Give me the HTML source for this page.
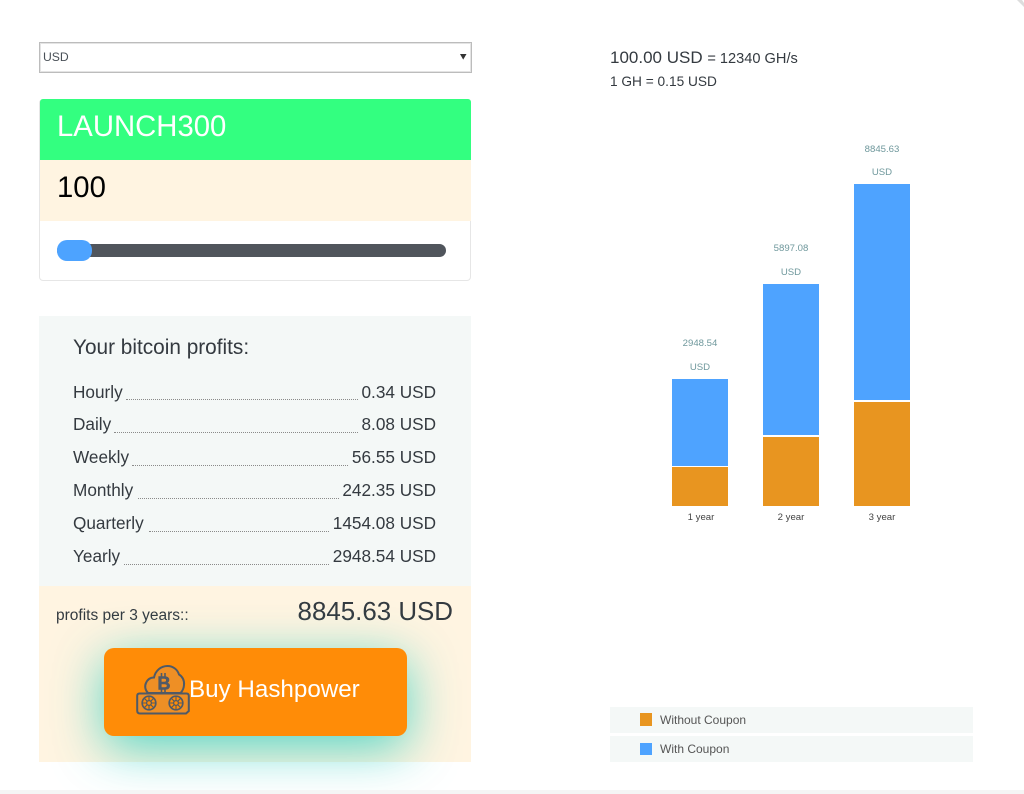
<!DOCTYPE html>
<html><head><meta charset="utf-8"><style>
*{box-sizing:border-box}
html,body{margin:0;padding:0;width:1024px;height:794px;overflow:hidden;background:#fff;font-family:"Liberation Sans",sans-serif;color:#343a40}
.a{position:absolute;white-space:nowrap}
.rl{position:absolute;left:73px;font-size:17.2px;line-height:22px;color:#343a40}
.rv{position:absolute;right:588px;font-size:17.2px;line-height:22px;color:#343a40}
.d{position:absolute;height:0;border-bottom:1px dotted #8a8a8a}
.bar{position:absolute;width:56px}
.bl{position:absolute;width:90px;text-align:center;font-size:9.6px;line-height:12px;color:#6f989c}
.xl{position:absolute;width:90px;text-align:center;font-size:9.6px;line-height:12px;color:#444}
</style></head><body>
<div class="a" style="left:39px;top:42px;width:433px;height:31px;border:1px solid #bcbcbc;background:#fff;box-shadow:inset 0 0 0 1px #e4e4e4"></div>
<div class="a" style="left:43px;top:50px;font-size:12.2px;line-height:14px;color:#495057">USD</div>
<svg class="a" style="left:460px;top:54px" width="7" height="6"><path d="M0 0H6.500L3.200 5.600Z" fill="#333"/></svg>

<div class="a" style="left:39px;top:99px;width:432px;height:182px;border:1px solid #e6e6e6;border-radius:4px;background:#fff;overflow:hidden"></div>
<div class="a" style="left:40px;top:99px;width:431px;height:61px;background:#33ff80;border-radius:3px 3px 0 0"></div>
<div class="a" style="left:57px;top:110px;font-size:29.3px;line-height:34px;color:#fff">LAUNCH300</div>
<div class="a" style="left:40px;top:160px;width:431px;height:61px;background:#fff4e1"></div>
<div class="a" style="left:57px;top:171px;font-size:29.3px;line-height:34px;color:#000">100</div>
<div class="a" style="left:57px;top:244px;width:389px;height:13px;border-radius:7px;background:#50555c"></div>
<div class="a" style="left:57px;top:240px;width:35px;height:20.500px;border-radius:10px;background:#4da3ff"></div>

<div class="a" style="left:39px;top:316px;width:432px;height:270px;background:#f4f8f7"></div>
<div class="a" style="left:73px;top:336px;font-size:20.8px;line-height:24px;color:#343a40">Your bitcoin profits:</div>

<div class="rl" style="top:381px">Hourly</div><div class="d" style="left:126px;width:232px;top:399px"></div><div class="rv" style="top:381px">0.34 USD</div>
<div class="rl" style="top:413px">Daily</div><div class="d" style="left:114px;width:244px;top:432px"></div><div class="rv" style="top:413px">8.08 USD</div>
<div class="rl" style="top:446px">Weekly</div><div class="d" style="left:132px;width:216px;top:465px"></div><div class="rv" style="top:446px">56.55 USD</div>
<div class="rl" style="top:479px">Monthly</div><div class="d" style="left:138px;width:201px;top:498px"></div><div class="rv" style="top:479px">242.35 USD</div>
<div class="rl" style="top:512px">Quarterly</div><div class="d" style="left:149px;width:180px;top:531px"></div><div class="rv" style="top:512px">1454.08 USD</div>
<div class="rl" style="top:545px">Yearly</div><div class="d" style="left:124px;width:205px;top:564px"></div><div class="rv" style="top:545px">2948.54 USD</div>

<div class="a" style="left:39px;top:586px;width:432px;height:176px;background:#fff4e1"></div>
<div class="a" style="left:56px;top:607px;font-size:15.5px;line-height:18px;color:#343a40">profits per 3 years::</div>
<div class="a" style="right:571px;top:597px;font-size:25.9px;line-height:30px;color:#343a40">8845.63 USD</div>

<div class="a" style="left:104px;top:648px;width:303px;height:88px;border-radius:10px;background:#ff8c07;box-shadow:0 12px 50px rgba(40,205,190,.8)"></div>
<svg class="a" style="left:135px;top:664px" width="56" height="52" viewBox="135 664 56 52" fill="none" stroke="#505a66" stroke-width="2">
<path d="M148 693C145 690 144.500 686 146 683C147.500 679.500 150.500 677.500 154 677.500C155.500 670.500 161 666 167.500 666C173 666 177.500 669.500 179 674.500C182.500 676.500 184.500 680.500 184 685C183.800 688.500 182.500 691 180.500 693Z" fill="#ee8f25"/>
<path d="M139.500 693.500H186.500C188 693.500 188.800 694.500 188.800 696V711L186 713.500H140C138 713.500 137.200 712.500 137.200 710.500V696C137.200 694.500 138 693.500 139.500 693.500Z" fill="#ee8f25"/>
<circle cx="149" cy="703" r="6.800" fill="#ff8c07" stroke-width="1.700"/><circle cx="149" cy="703" r="2.400" stroke-width="1.300"/>
<path d="M149 696.500V700.600M149 705.400V709.500M142.500 703H146.600M151.400 703H155.500M144.400 698.400L147.300 701.300M150.700 704.700L153.600 707.600M153.600 698.400L150.700 701.300M147.300 704.700L144.400 707.600" stroke-width="1.100"/>
<circle cx="176" cy="703" r="6.800" fill="#ff8c07" stroke-width="1.700"/><circle cx="176" cy="703" r="2.400" stroke-width="1.300"/>
<path d="M176 696.500V700.600M176 705.400V709.500M169.500 703H173.600M178.400 703H182.500M171.400 698.400L174.300 701.300M177.700 704.700L180.600 707.600M180.600 698.400L177.700 701.300M174.300 704.700L171.400 707.600" stroke-width="1.100"/>
<text x="157.500" y="689.500" font-family="Liberation Sans" font-size="18" font-weight="700" fill="#505a66" stroke="#505a66" stroke-width=".6">B</text>
<path d="M161.500 673V677M165 673V677M161.500 689V692M165 689V692" stroke-width="1.600"/>
</svg>
<div class="a" style="left:189px;top:675px;font-size:24.2px;line-height:30px;color:#fff">Buy Hashpower</div>

<div class="a" style="left:610px;top:48px;font-size:17px;line-height:20px;color:#343a40">100.00 USD <span style="font-size:14.600px">= 12340 GH/s</span></div>
<div class="a" style="left:610px;top:73px;font-size:13.700px;line-height:17px;color:#343a40">1 GH = 0.15 USD</div>

<div class="bar" style="left:672px;top:379px;height:86.500px;background:#4ea3ff"></div>
<div class="bar" style="left:672px;top:467px;height:39px;background:#e89520"></div>
<div class="bar" style="left:763px;top:284px;height:151px;background:#4ea3ff"></div>
<div class="bar" style="left:763px;top:437px;height:69px;background:#e89520"></div>
<div class="bar" style="left:854px;top:184px;height:216px;background:#4ea3ff"></div>
<div class="bar" style="left:854px;top:402px;height:104px;background:#e89520"></div>

<div class="bl" style="left:655px;top:338px">2948.54</div><div class="bl" style="left:655px;top:362px">USD</div>
<div class="bl" style="left:746px;top:243px">5897.08</div><div class="bl" style="left:746px;top:267px">USD</div>
<div class="bl" style="left:837px;top:144px">8845.63</div><div class="bl" style="left:837px;top:167px">USD</div>
<div class="xl" style="left:656px;top:512px">1 year</div>
<div class="xl" style="left:746px;top:512px">2 year</div>
<div class="xl" style="left:837px;top:512px">3 year</div>

<div class="a" style="left:610px;top:707px;width:363px;height:26px;background:#f4f8f7"></div>
<div class="a" style="left:640px;top:713px;width:12px;height:13px;background:#e89520"></div>
<div class="a" style="left:660px;top:713px;font-size:12px;line-height:14px;color:#555">Without Coupon</div>
<div class="a" style="left:610px;top:736px;width:363px;height:26px;background:#f4f8f7"></div>
<div class="a" style="left:640px;top:743px;width:12px;height:12px;background:#4ea3ff"></div>
<div class="a" style="left:660px;top:742px;font-size:12px;line-height:14px;color:#555">With Coupon</div>

<svg class="a" style="left:1015px;top:0" width="9" height="9"><path d="M2 0H7L9 3V7Z" fill="#ddd"/></svg>
<div class="a" style="left:0;top:790px;width:1024px;height:4px;background:#f5f5f5"></div>
</body></html>
